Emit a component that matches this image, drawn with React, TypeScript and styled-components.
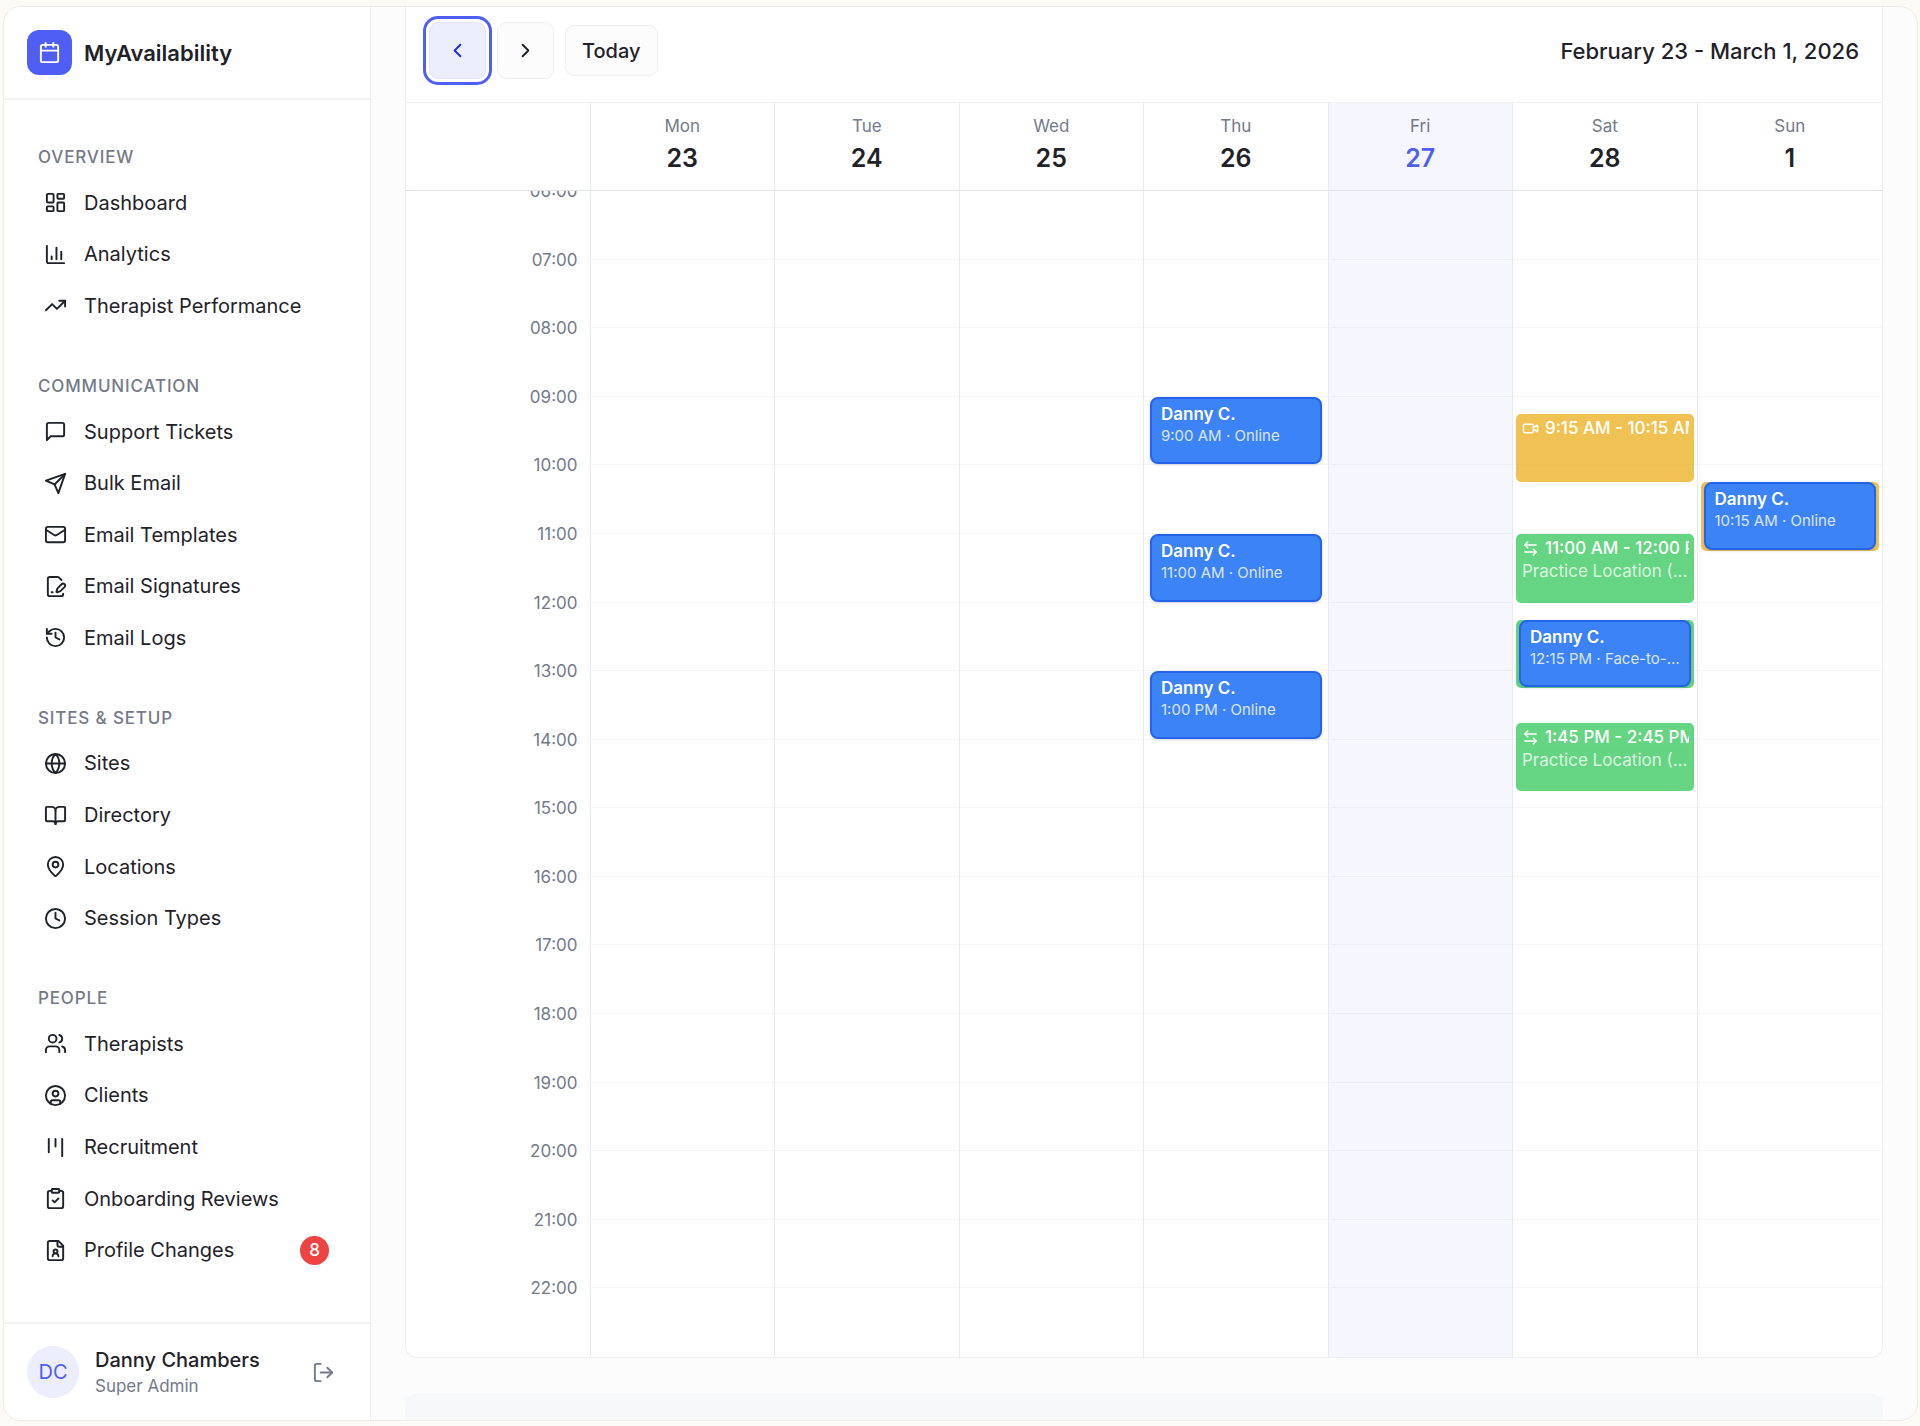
import React from "react";
import styled, { createGlobalStyle, css } from "styled-components";
import {
  ArrowLeftRight,
  BookOpen,
  Calendar,
  ChartColumn,
  ChevronLeft,
  ChevronRight,
  CircleUser,
  ClipboardCheck,
  Clock,
  FilePenLine,
  Globe,
  History,
  Kanban,
  LayoutDashboard,
  LogOut,
  Mail,
  MapPin,
  TrendingUp,
  Users,
  Video,
} from "lucide-react";

const color = {
  ink: "#1f2229",
  muted: "#737a88",
  line: "#eeeff1",
  lineSoft: "#f4f4f6",
  lineStrong: "#e9eaed",
  brand: "#4f5ff5",
  brandSoft: "#ecedfd",
  today: "#f6f7fe",
};

const GlobalStyle = createGlobalStyle`
  *, *::before, *::after { box-sizing: border-box; }
  body {
    margin: 0;
    background: #fbfaf5;
    color: ${color.ink};
    font-family: Inter, "Liberation Sans", sans-serif;
    -webkit-font-smoothing: antialiased;
  }
  button { font: inherit; color: inherit; cursor: pointer; }
  ul, ol, h1, h2, p { margin: 0; padding: 0; list-style: none; }
`;

const Page = styled.div`
  height: 100vh;
  min-height: 1000px;
  padding: 6px 2px 5px 3px;
`;

const Shell = styled.div`
  display: grid;
  grid-template-columns: 367px minmax(0, 1fr);
  height: 100%;
  overflow: hidden;
  border: 1px solid #ecebe4;
  border-radius: 18px;
  background: #fcfcfd;
`;

/* Sidebar */

const Sidebar = styled.aside`
  display: flex;
  flex-direction: column;
  min-height: 0;
  border-right: 1px solid ${color.line};
  background: #fff;
`;

const Brand = styled.header`
  display: flex;
  align-items: center;
  gap: 12px;
  height: 93px;
  padding: 0 23px;
  border-bottom: 2px solid ${color.lineSoft};
`;

const BrandMark = styled.span`
  display: grid;
  place-items: center;
  width: 45px;
  height: 45px;
  border-radius: 12px;
  background: ${color.brand};
  color: #fff;
`;

const BrandName = styled.h1`
  font-size: 22px;
  font-weight: 600;
  line-height: 28px;
`;

const Nav = styled.nav`
  display: flex;
  flex: 1;
  flex-direction: column;
  gap: 34px;
  min-height: 0;
  padding: 37px 34px 46px;
`;

const NavGroup = styled.section<{ $count: number }>`
  display: flex;
  flex: ${(p) => p.$count} 0 40px;
  flex-direction: column;
`;

const NavHeading = styled.h2`
  flex: none;
  font-size: 17px;
  font-weight: 500;
  line-height: 40px;
  letter-spacing: 0.05em;
  text-transform: uppercase;
  color: ${color.muted};
`;

const NavList = styled.ul`
  display: grid;
  flex: 1;
  grid-auto-rows: minmax(0, 1fr);
`;

const NavLink = styled.a`
  display: flex;
  align-items: center;
  gap: 17px;
  height: 100%;
  padding-left: 6px;
  border-radius: 8px;
  color: inherit;
  font-size: 20px;
  line-height: 28px;
  text-decoration: none;

  svg { flex: none; }
`;

const Count = styled.span`
  display: grid;
  place-items: center;
  width: 29px;
  height: 29px;
  margin: 0 7px 0 auto;
  border-radius: 50%;
  background: #ef4343;
  color: #fff;
  font-size: 17px;
  font-weight: 500;
`;

const Account = styled.footer`
  display: flex;
  align-items: center;
  gap: 16px;
  height: 98px;
  padding: 0 31px 0 23px;
  border-top: 2px solid ${color.lineSoft};
`;

const Avatar = styled.span`
  display: grid;
  place-items: center;
  width: 52px;
  height: 52px;
  border-radius: 50%;
  background: ${color.brandSoft};
  color: ${color.brand};
  font-size: 20px;
`;

const AccountText = styled.div`
  flex: 1;
`;

const AccountName = styled.p`
  font-size: 20px;
  font-weight: 500;
  line-height: 28px;
`;

const AccountRole = styled.p`
  font-size: 17px;
  line-height: 24px;
  color: ${color.muted};
`;

const LogOutButton = styled.button`
  display: grid;
  place-items: center;
  padding: 4px;
  border: 0;
  background: none;
  color: ${color.muted};
`;

/* Calendar */

const Main = styled.main`
  display: flex;
  flex-direction: column;
  gap: 35px;
  min-width: 0;
  min-height: 0;
  padding: 0 34px;
`;

const CalendarCard = styled.section`
  display: flex;
  flex: 1;
  flex-direction: column;
  min-height: 0;
  overflow: hidden;
  border: 1px solid ${color.line};
  border-top: 0;
  border-radius: 0 0 12px 12px;
  background: #fff;
`;

const Toolbar = styled.header`
  display: flex;
  align-items: center;
  gap: 11px;
  height: 96px;
  padding: 0 23px 8px;
  border-bottom: 1px solid ${color.line};
`;

const ToolButton = styled.button`
  height: 51px;
  padding: 0 16px;
  border: 1px solid ${color.line};
  border-radius: 9px;
  background: #fcfcfd;
  font-size: 20px;
  font-weight: 500;
`;

const StepButton = styled.button<{ $focused?: boolean }>`
  display: grid;
  place-items: center;
  width: 57px;
  height: 57px;
  padding: 0;
  border: 1px solid ${color.line};
  border-radius: 9px;
  background: #fcfcfd;

  ${(p) =>
    p.$focused &&
    css`
      border-color: #e4e5f6;
      outline: 3px solid ${color.brand};
      outline-offset: 3px;
      background: ${color.brandSoft};
      color: #1b2cf0;
    `}
`;

const RangeTitle = styled.h2`
  margin-left: auto;
  font-size: 22px;
  font-weight: 500;
  line-height: 32px;
`;

const WeekRow = styled.div`
  display: grid;
  grid-template-columns: repeat(8, minmax(0, 1fr));
`;

const DayHeads = styled(WeekRow)`
  height: 88px;
  border-bottom: 1px solid #e2e3e8;
`;

const WeekBody = styled(WeekRow)`
  flex: 1;
  min-height: 0;
`;

const DayHead = styled.div<{ $today?: boolean }>`
  display: flex;
  flex-direction: column;
  align-items: center;
  padding-top: 11px;
  border-right: 1px solid ${color.lineStrong};
  background: ${(p) => (p.$today ? color.today : "none")};
  color: ${(p) => (p.$today ? color.brand : "inherit")};

  &:last-child { border-right: 0; }
`;

const DayName = styled.span`
  font-size: 17px;
  line-height: 24px;
  color: ${color.muted};
`;

const DayNumber = styled.span`
  font-size: 25px;
  font-weight: 600;
  line-height: 40px;
`;

const HourColumn = styled.ol`
  display: grid;
  grid-template-rows: repeat(17, minmax(0, 1fr));
  overflow: hidden;
  border-right: 1px solid ${color.lineStrong};
`;

const HourLabel = styled.li`
  margin-top: -12px;
  padding-right: 12px;
  font-size: 17px;
  line-height: 24px;
  text-align: right;
  color: ${color.muted};
`;

/* Each day is divided into quarter hours, so a slot is placed by its row. */
const DayColumn = styled.div<{ $today?: boolean }>`
  display: grid;
  grid-template-columns: minmax(0, 1fr);
  grid-template-rows: repeat(68, minmax(0, 1fr));
  border-right: 1px solid ${color.lineStrong};
  background: ${(p) => (p.$today ? color.today : "none")};

  &:last-child { border-right: 0; }
`;

const HourCell = styled.div<{ $hour: number }>`
  grid-column: 1;
  grid-row: ${(p) => p.$hour * 4 + 1} / span 4;
  border-bottom: 1px solid rgba(30, 41, 80, 0.045);

  &:nth-child(17) { border-bottom: 0; }
`;

const Slot = styled.button<{ $row: number }>`
  display: flex;
  flex-direction: column;
  grid-column: 1;
  grid-row: ${(p) => p.$row} / span 4;
  min-width: 0;
  overflow: hidden;
  text-align: left;
  color: #fff;
`;

const OpenSlot = styled(Slot)<{ $kind: "online" | "flexible" }>`
  margin: 0 3px;
  padding: 3px 5px 3px 6px;
  border: 0;
  border-radius: 5px;
  background: ${(p) =>
    p.$kind === "online" ? "rgba(235, 179, 40, 0.8)" : "rgba(62, 201, 100, 0.8)"};
`;

const Booking = styled(Slot)`
  margin: 0 6px 1px;
  padding: 4px 4px 4px 9px;
  border: 2px solid #2563eb;
  border-radius: 8px;
  background: #3c83f8;
  box-shadow: 0 1px 3px rgba(20, 30, 60, 0.16);
`;

const SlotTime = styled.span`
  display: flex;
  align-items: center;
  gap: 6px;
  width: 100%;
  overflow: hidden;
  font-size: 17px;
  font-weight: 500;
  line-height: 23px;
  white-space: nowrap;

  svg { flex: none; }
`;

const SlotPlace = styled.span`
  width: 100%;
  overflow: hidden;
  font-size: 17px;
  line-height: 23px;
  text-overflow: ellipsis;
  white-space: nowrap;
  opacity: 0.75;
`;

const ClientName = styled.span`
  font-size: 17px;
  font-weight: 600;
  line-height: 22px;
`;

const BookingInfo = styled.span`
  width: 100%;
  overflow: hidden;
  font-size: 15px;
  line-height: 22px;
  text-overflow: ellipsis;
  white-space: nowrap;
  opacity: 0.8;
`;

const NextPanel = styled.section`
  flex: none;
  height: 27px;
  border-radius: 12px 12px 0 0;
  background: #f7f8fa;
`;

/* Icons */

const strokeProps = {
  width: 23,
  height: 23,
  viewBox: "0 0 24 24",
  fill: "none",
  stroke: "currentColor",
  strokeWidth: 2,
  strokeLinecap: "round" as const,
  strokeLinejoin: "round" as const,
};

const SpeechIcon = () => (
  <svg {...strokeProps}>
    <path d="M21 15a2 2 0 0 1-2 2H7l-4 4V5a2 2 0 0 1 2-2h14a2 2 0 0 1 2 2z" />
  </svg>
);

const PlaneIcon = () => (
  <svg {...strokeProps}>
    <path d="m22 2-7 20-4-9-9-4Z" />
    <path d="M22 2 11 13" />
  </svg>
);

const ProfileFileIcon = () => (
  <svg {...strokeProps}>
    <path d="M15 2H6a2 2 0 0 0-2 2v16a2 2 0 0 0 2 2h12a2 2 0 0 0 2-2V7Z" />
    <path d="M14 2v4a2 2 0 0 0 2 2h4" />
    <path d="M15 18a3 3 0 1 0-6 0" />
    <circle cx="12" cy="13" r="2" />
  </svg>
);

type NavEntry = {
  label: string;
  icon: React.ComponentType<{ size?: number }>;
  count?: number;
};

const navigation: { title: string; items: NavEntry[] }[] = [
  {
    title: "Overview",
    items: [
      { label: "Dashboard", icon: LayoutDashboard },
      { label: "Analytics", icon: ChartColumn },
      { label: "Therapist Performance", icon: TrendingUp },
    ],
  },
  {
    title: "Communication",
    items: [
      { label: "Support Tickets", icon: SpeechIcon },
      { label: "Bulk Email", icon: PlaneIcon },
      { label: "Email Templates", icon: Mail },
      { label: "Email Signatures", icon: FilePenLine },
      { label: "Email Logs", icon: History },
    ],
  },
  {
    title: "Sites & Setup",
    items: [
      { label: "Sites", icon: Globe },
      { label: "Directory", icon: BookOpen },
      { label: "Locations", icon: MapPin },
      { label: "Session Types", icon: Clock },
    ],
  },
  {
    title: "People",
    items: [
      { label: "Therapists", icon: Users },
      { label: "Clients", icon: CircleUser },
      { label: "Recruitment", icon: Kanban },
      { label: "Onboarding Reviews", icon: ClipboardCheck },
      { label: "Profile Changes", icon: ProfileFileIcon, count: 8 },
    ],
  },
];

type Entry =
  | { type: "open"; kind: "online" | "flexible"; start: number; time: string; place?: string }
  | { type: "booking"; start: number; client: string; info: string };

type Day = { name: string; number: number; today?: boolean; entries: Entry[] };

const practice = "Practice Location (Main Street)";

const week: Day[] = [
  { name: "Mon", number: 23, entries: [] },
  { name: "Tue", number: 24, entries: [] },
  { name: "Wed", number: 25, entries: [] },
  {
    name: "Thu",
    number: 26,
    entries: [
      { type: "booking", start: 9, client: "Danny C.", info: "9:00 AM · Online" },
      { type: "booking", start: 11, client: "Danny C.", info: "11:00 AM · Online" },
      { type: "booking", start: 13, client: "Danny C.", info: "1:00 PM · Online" },
    ],
  },
  { name: "Fri", number: 27, today: true, entries: [] },
  {
    name: "Sat",
    number: 28,
    entries: [
      { type: "open", kind: "online", start: 9.25, time: "9:15 AM - 10:15 AM" },
      { type: "open", kind: "flexible", start: 11, time: "11:00 AM - 12:00 PM", place: practice },
      { type: "open", kind: "flexible", start: 12.25, time: "" },
      { type: "booking", start: 12.25, client: "Danny C.", info: "12:15 PM · Face-to-face" },
      { type: "open", kind: "flexible", start: 13.75, time: "1:45 PM - 2:45 PM", place: practice },
    ],
  },
  {
    name: "Sun",
    number: 1,
    entries: [
      { type: "open", kind: "online", start: 10.25, time: "" },
      { type: "booking", start: 10.25, client: "Danny C.", info: "10:15 AM · Online" },
    ],
  },
];

const firstHour = 6;
const hours = Array.from({ length: 17 }, (_, i) => firstHour + i);
const rowOf = (start: number) => (start - firstHour) * 4 + 1;

function CalendarEntry({ entry }: { entry: Entry }) {
  if (entry.type === "booking") {
    return (
      <Booking type="button" $row={rowOf(entry.start)}>
        <ClientName>{entry.client}</ClientName>
        <BookingInfo>{entry.info}</BookingInfo>
      </Booking>
    );
  }
  return (
    <OpenSlot type="button" $row={rowOf(entry.start)} $kind={entry.kind} aria-label="Open slot">
      {entry.time && (
        <SlotTime>
          {entry.kind === "online" ? <Video size={17} /> : <ArrowLeftRight size={17} />}
          {entry.time}
        </SlotTime>
      )}
      {entry.place && <SlotPlace>{entry.place}</SlotPlace>}
    </OpenSlot>
  );
}

export default function App() {
  return (
    <Page>
      <GlobalStyle />
      <Shell>
        <Sidebar>
          <Brand>
            <BrandMark>
              <Calendar size={23} />
            </BrandMark>
            <BrandName>MyAvailability</BrandName>
          </Brand>
          <Nav>
            {navigation.map((group) => (
              <NavGroup key={group.title} $count={group.items.length}>
                <NavHeading>{group.title}</NavHeading>
                <NavList>
                  {group.items.map(({ label, icon: Icon, count }) => (
                    <li key={label}>
                      <NavLink href="#">
                        <Icon size={23} />
                        {label}
                        {count && <Count>{count}</Count>}
                      </NavLink>
                    </li>
                  ))}
                </NavList>
              </NavGroup>
            ))}
          </Nav>
          <Account>
            <Avatar>DC</Avatar>
            <AccountText>
              <AccountName>Danny Chambers</AccountName>
              <AccountRole>Super Admin</AccountRole>
            </AccountText>
            <LogOutButton type="button" aria-label="Log out">
              <LogOut size={23} />
            </LogOutButton>
          </Account>
        </Sidebar>

        <Main>
          <CalendarCard>
            <Toolbar>
              <StepButton type="button" aria-label="Previous week" $focused>
                <ChevronLeft size={23} />
              </StepButton>
              <StepButton type="button" aria-label="Next week">
                <ChevronRight size={23} />
              </StepButton>
              <ToolButton type="button">Today</ToolButton>
              <RangeTitle>February 23 - March 1, 2026</RangeTitle>
            </Toolbar>
            <DayHeads>
              <DayHead />
              {week.map((day) => (
                <DayHead key={day.name} $today={day.today}>
                  <DayName>{day.name}</DayName>
                  <DayNumber>{day.number}</DayNumber>
                </DayHead>
              ))}
            </DayHeads>
            <WeekBody>
              <HourColumn>
                {hours.map((hour) => (
                  <HourLabel key={hour}>{String(hour).padStart(2, "0")}:00</HourLabel>
                ))}
              </HourColumn>
              {week.map((day) => (
                <DayColumn key={day.name} $today={day.today}>
                  {hours.map((hour, i) => (
                    <HourCell key={hour} $hour={i} />
                  ))}
                  {day.entries.map((entry, i) => (
                    <CalendarEntry key={i} entry={entry} />
                  ))}
                </DayColumn>
              ))}
            </WeekBody>
          </CalendarCard>
          <NextPanel />
        </Main>
      </Shell>
    </Page>
  );
}
